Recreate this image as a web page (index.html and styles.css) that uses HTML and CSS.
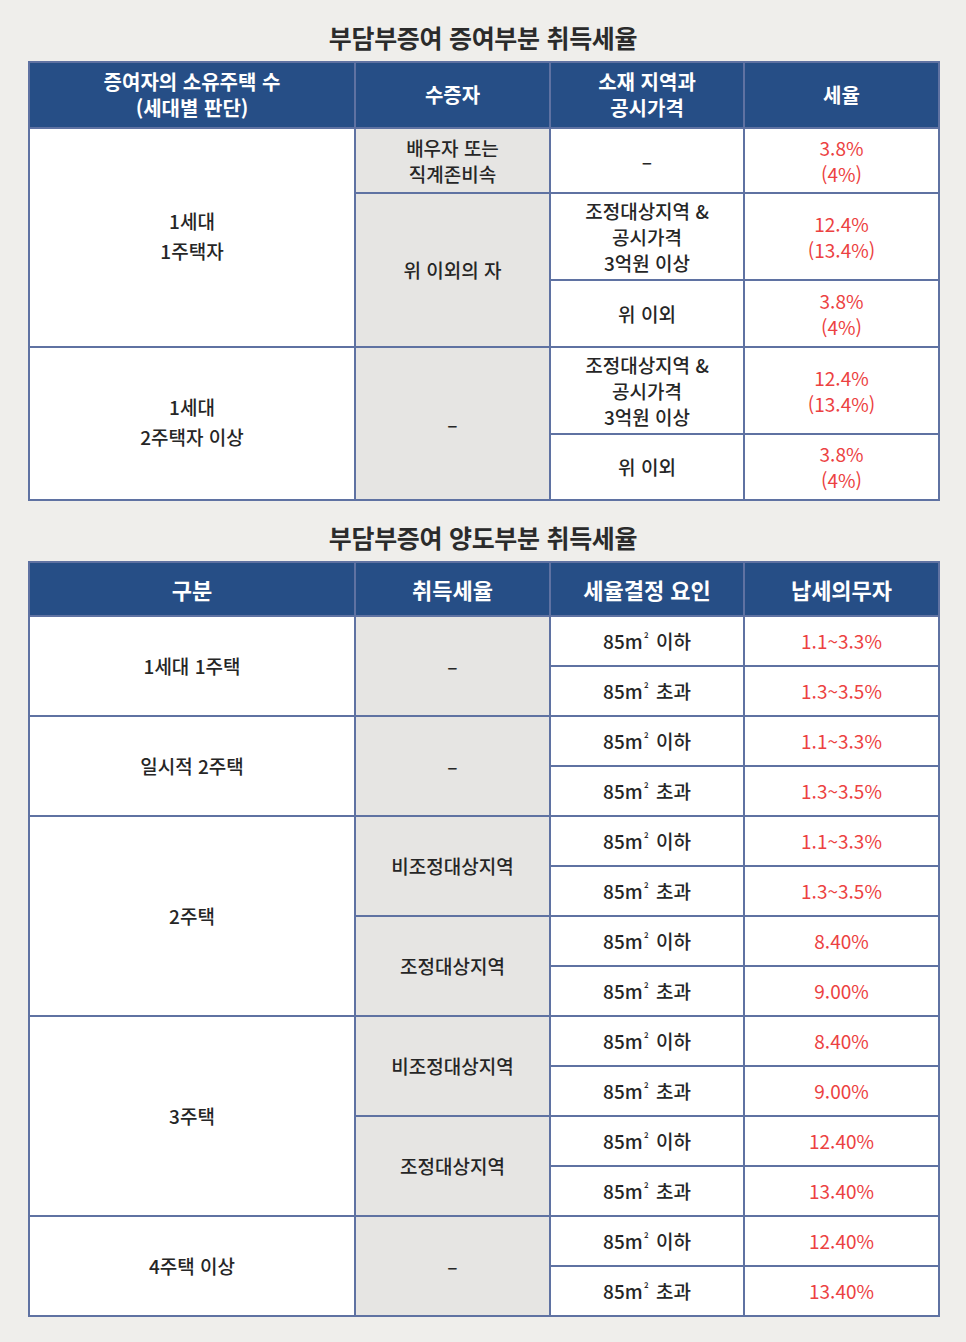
FILE: index.html
```html
<!DOCTYPE html>
<html lang="ko">
<head>
<meta charset="utf-8">
<link rel="stylesheet" href="styles.css">
</head>
<body>
<div class="page">
  <h2 class="title">부담부증여 증여부분 취득세율</h2>
  <table class="tbl t1">
    <colgroup><col class="c1"><col class="c2"><col class="c3"><col class="c4"></colgroup>
    <thead>
      <tr class="h1"><th>증여자의 소유주택 수<br>(세대별 판단)</th><th>수증자</th><th>소재 지역과<br>공시가격</th><th>세율</th></tr>
    </thead>
    <tbody>
      <tr class="r65"><td rowspan="3" class="wide">1세대<br>1주택자</td><td class="gray">배우자 또는<br>직계존비속</td><td>–</td><td class="red">3.8%<br>(4%)</td></tr>
      <tr class="r87"><td rowspan="2" class="gray">위 이외의 자</td><td>조정대상지역 &amp;<br>공시가격<br>3억원 이상</td><td class="red">12.4%<br>(13.4%)</td></tr>
      <tr class="r67"><td>위 이외</td><td class="red">3.8%<br>(4%)</td></tr>
      <tr class="r87"><td rowspan="2" class="wide">1세대<br>2주택자 이상</td><td rowspan="2" class="gray">–</td><td>조정대상지역 &amp;<br>공시가격<br>3억원 이상</td><td class="red">12.4%<br>(13.4%)</td></tr>
      <tr class="r66"><td>위 이외</td><td class="red">3.8%<br>(4%)</td></tr>
    </tbody>
  </table>

  <h2 class="title">부담부증여 양도부분 취득세율</h2>
  <table class="tbl t2">
    <colgroup><col class="c1"><col class="c2"><col class="c3"><col class="c4"></colgroup>
    <thead>
      <tr class="h2"><th>구분</th><th>취득세율</th><th>세율결정 요인</th><th>납세의무자</th></tr>
    </thead>
    <tbody>
      <tr><td rowspan="2">1세대 1주택</td><td rowspan="2" class="gray">–</td><td>85m<span class="sq">²</span> 이하</td><td class="red">1.1~3.3%</td></tr>
      <tr><td>85m<span class="sq">²</span> 초과</td><td class="red">1.3~3.5%</td></tr>
      <tr><td rowspan="2">일시적 2주택</td><td rowspan="2" class="gray">–</td><td>85m<span class="sq">²</span> 이하</td><td class="red">1.1~3.3%</td></tr>
      <tr><td>85m<span class="sq">²</span> 초과</td><td class="red">1.3~3.5%</td></tr>
      <tr><td rowspan="4">2주택</td><td rowspan="2" class="gray">비조정대상지역</td><td>85m<span class="sq">²</span> 이하</td><td class="red">1.1~3.3%</td></tr>
      <tr><td>85m<span class="sq">²</span> 초과</td><td class="red">1.3~3.5%</td></tr>
      <tr><td rowspan="2" class="gray">조정대상지역</td><td>85m<span class="sq">²</span> 이하</td><td class="red">8.40%</td></tr>
      <tr><td>85m<span class="sq">²</span> 초과</td><td class="red">9.00%</td></tr>
      <tr><td rowspan="4">3주택</td><td rowspan="2" class="gray">비조정대상지역</td><td>85m<span class="sq">²</span> 이하</td><td class="red">8.40%</td></tr>
      <tr><td>85m<span class="sq">²</span> 초과</td><td class="red">9.00%</td></tr>
      <tr><td rowspan="2" class="gray">조정대상지역</td><td>85m<span class="sq">²</span> 이하</td><td class="red">12.40%</td></tr>
      <tr><td>85m<span class="sq">²</span> 초과</td><td class="red">13.40%</td></tr>
      <tr><td rowspan="2">4주택 이상</td><td rowspan="2" class="gray">–</td><td>85m<span class="sq">²</span> 이하</td><td class="red">12.40%</td></tr>
      <tr><td>85m<span class="sq">²</span> 초과</td><td class="red">13.40%</td></tr>
    </tbody>
  </table>
</div>
</body>
</html>
```

FILE: styles.css
```css
html, body {
  margin: 0;
  padding: 0;
  background: #efeeeb;
}
body {
  font-family: "Noto Sans CJK KR", "Noto Sans", sans-serif;
  color: #2f2f2f;
}
.page {
  width: 910px;
  margin: 0 auto;
  padding: 21px 0 24px;
  display: flex;
  flex-direction: column;
}
.title {
  margin: 0 0 8px;
  font-size: 25px;
  line-height: 32px;
  font-weight: 700;
  text-align: center;
  color: #2b2b2b;
  letter-spacing: -0.3px;
}
.tbl {
  width: 910px;
  border-collapse: collapse;
  table-layout: fixed;
  border: 2px solid #5f72a2;
  margin-bottom: 20px;
}
.tbl:last-child { margin-bottom: 0; }
.c1 { width: 326px; }
.c2 { width: 195px; }
.c3 { width: 194px; }
.c4 { width: 195px; }
.tbl th, .tbl td {
  border: 2px solid #5f72a2;
  text-align: center;
  vertical-align: middle;
  padding: 0;
}
.tbl th {
  background: #264e86;
  color: #ffffff;
  font-weight: 700;
}
.tbl td {
  background: #ffffff;
  font-size: 19px;
  line-height: 26px;
  font-weight: 500;
  color: #262626;
}
.tbl td.wide { line-height: 30px; padding-bottom: 4px; }
.tbl td.gray { background: #e6e5e3; }
.tbl td.red { color: #ec4141; font-weight: 400; }
.sq {
  font-size: 12px;
  vertical-align: 6px;
  line-height: 0;
  margin-left: 1px;
  margin-right: 2px;
}
.t1 th { font-size: 20px; line-height: 26px; }
.h1 { height: 66px; }
.r65 { height: 65px; }
.r87 { height: 87px; }
.r67 { height: 67px; }
.r66 { height: 66px; }
.t2 th { font-size: 22px; line-height: 28px; }
.h2 { height: 54px; }
.t2 tbody tr { height: 50px; }
.t2 td { font-size: 19px; }
```
